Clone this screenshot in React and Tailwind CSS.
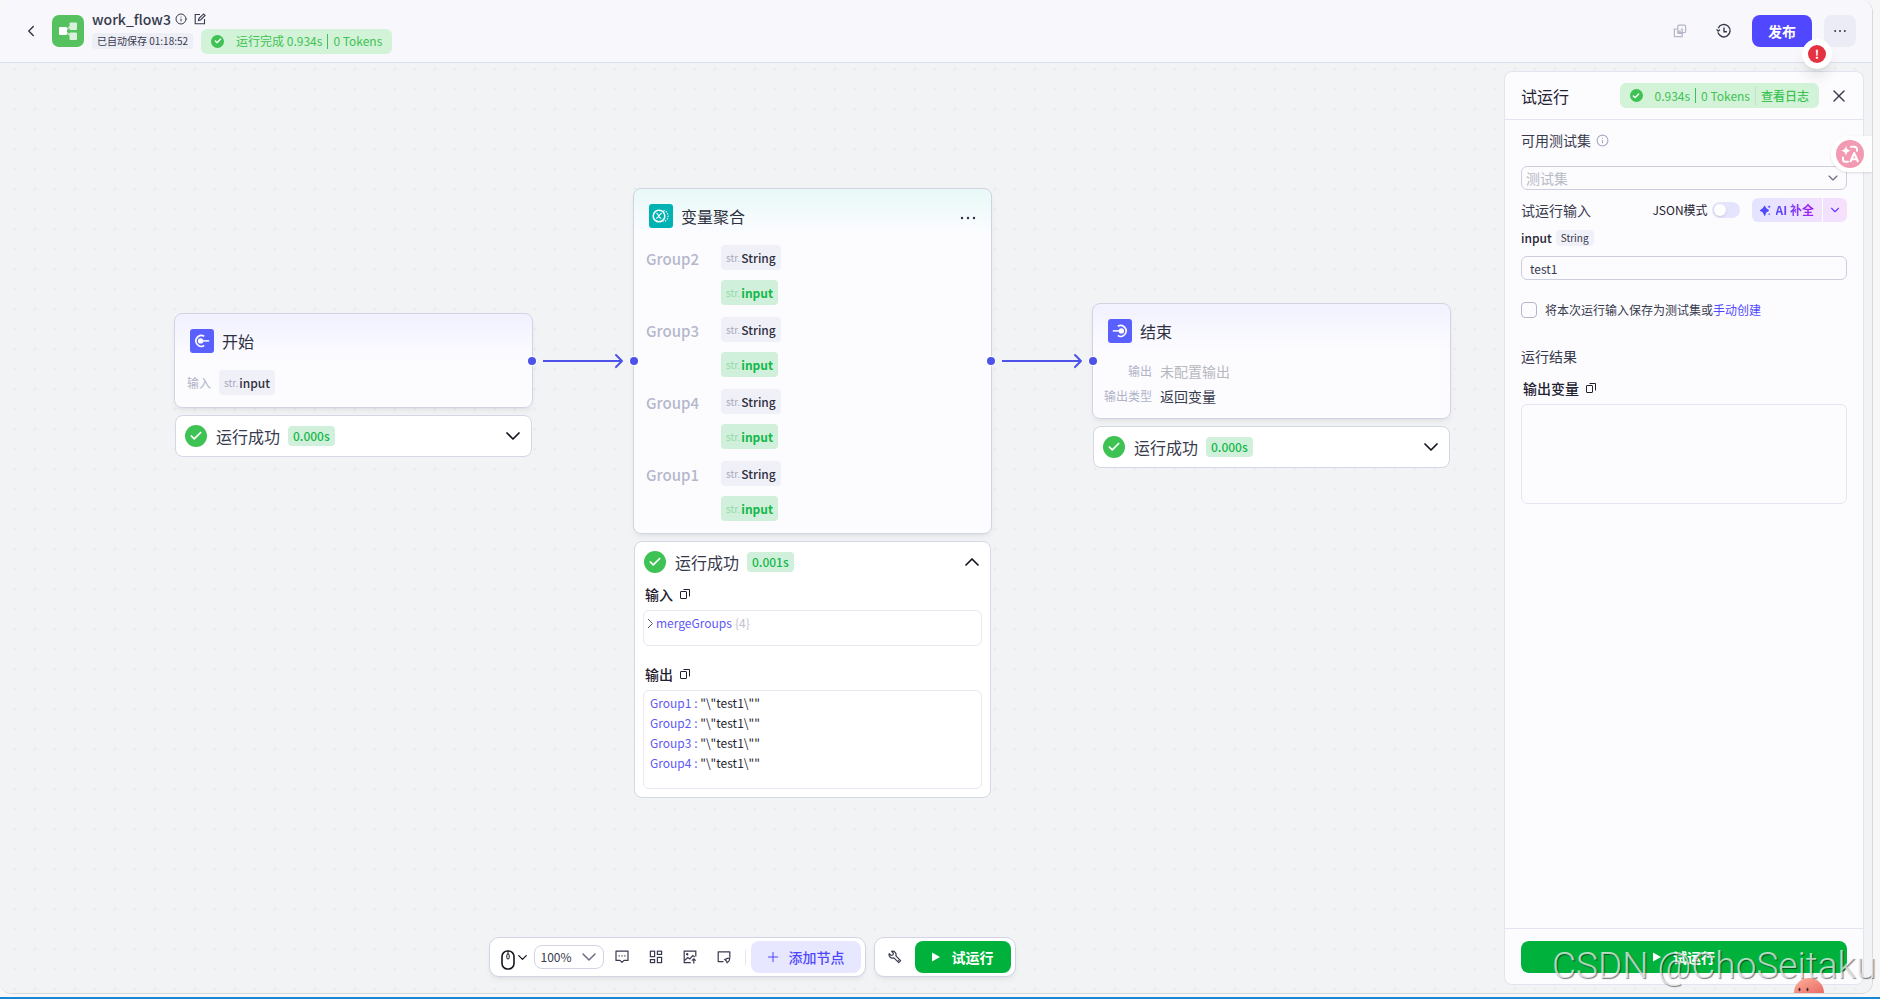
import React, { useState } from "react";
import { Check, ChevronDown, ChevronLeft, ChevronUp, Info, Plus, X } from "lucide-react";

const groups = ["Group2", "Group3", "Group4", "Group1"];
const outputs = ["Group1", "Group2", "Group3", "Group4"];

const CopyIcon = () => (
  <svg className="w-3 h-3" viewBox="0 0 12 12" fill="none" stroke="currentColor" strokeWidth="1">
    <rect x="1.5" y="3.5" width="6" height="7" rx="0.5" />
    <path d="M4.500 1.500h6v7" />
  </svg>
);

const MoreIcon = () => (
  <svg className="w-4 h-4" viewBox="0 0 16 16" fill="currentColor">
    <circle cx="2" cy="8" r="1.2" />
    <circle cx="8" cy="8" r="1.2" />
    <circle cx="14" cy="8" r="1.2" />
  </svg>
);

const CheckDot = () => (
  <span className="w-[13px] h-[13px] rounded-full bg-[#3ec254] text-white flex items-center justify-center">
    <Check className="w-2 h-2" strokeWidth={4} />
  </span>
);

const EditIcon = () => (
  <svg className="w-3 h-3" viewBox="0 0 12 12" fill="none" stroke="currentColor" strokeWidth="1.1">
    <path d="M6 1.5H1.2v9.3h9.3V6" />
    <path d="M4.5 7.5 5 5.4 9.6.9l1.5 1.5-4.5 4.6z" />
  </svg>
);

const StartIcon = () => (
  <svg className="w-6 h-6" viewBox="0 0 24 24" fill="none">
    <rect width="24" height="24" rx="3" fill="#5a5fff" />
    <path d="M14.2 7.3a5.4 5.4 0 1 0 0 9.2" stroke="#fff" strokeWidth="1.6" />
    <circle cx="10.6" cy="11.9" r="2.7" fill="#fff" />
    <path d="M12 11.9h7.2" stroke="#fff" strokeWidth="1.5" />
  </svg>
);

const EndIcon = () => (
  <svg className="w-6 h-6" viewBox="0 0 24 24" fill="none">
    <rect width="24" height="24" rx="3" fill="#5a5fff" />
    <path d="M9.8 7.3a5.4 5.4 0 1 1 0 9.2" stroke="#fff" strokeWidth="1.6" />
    <circle cx="13.4" cy="11.9" r="2.7" fill="#fff" />
    <path d="M4.8 11.9H12" stroke="#fff" strokeWidth="1.5" />
  </svg>
);

const MergeIcon = () => (
  <svg className="w-6 h-6" viewBox="0 0 24 24" fill="none" stroke="#fff">
    <rect width="24" height="24" rx="3" fill="#00b2b2" stroke="none" />
    <circle cx="10" cy="12" r="5.8" strokeWidth="1.5" />
    <path d="M7.4 9.4c2.2-.6 2 5.4 4.8 5M12.8 9.4c-2-.4-3.4 5-5.6 5" strokeWidth="1.2" />
    <path d="M14.4 6.3a5.8 5.8 0 0 1 0 11.4" strokeWidth="1.2" strokeDasharray="1.5 1" opacity=".8" />
  </svg>
);

const Tag = ({ name, active }) => (
  <span
    className={`h-[25px] px-[5px] rounded flex items-center gap-px text-xs ${
      active ? "bg-[#d1f0dc] text-[#12b849] font-bold" : "bg-[#f0f0f8] text-[#30303f] font-medium"
    }`}
  >
    <span className={`text-[10px] font-normal ${active ? "text-[#90dba9]" : "text-[#a7a9be]"}`}>str.</span>
    {name}
  </span>
);

const Port = ({ side }) => (
  <span
    className={`absolute z-10 w-2 h-2 rounded-full bg-[#4d53e8] ring-1 ring-white ${
      side === "left" ? "-left-1" : "-right-1"
    } top-1/2 -translate-y-1/2`}
  />
);

const NodeHeader = ({ icon, title, children }) => (
  <div className="flex items-center gap-2 px-[15px] pt-[15px] text-[#2e3040]">
    {icon}
    <h2 className="flex-1 text-base leading-6">{title}</h2>
    {children}
  </div>
);

const RunResult = ({ time, open, children }) => (
  <div className="mt-[7px] mx-px rounded-lg border border-[#d5d7e6] bg-white">
    <div className="h-10 pl-[9px] pr-[6px] flex items-center">
      <span className="w-[22px] h-[22px] rounded-full bg-[#3ec254] text-white flex items-center justify-center">
        <Check className="w-[14px] h-[14px]" strokeWidth={3} />
      </span>
      <span className="ml-[9px] text-base leading-6 text-[#383a4d]">运行成功</span>
      <span className="ml-2 h-5 px-[5px] rounded bg-[#d1f0dc] text-xs leading-5 font-medium text-[#12b849]">{time}</span>
      <button aria-label="展开" className="ml-auto text-[#15161f]">
        {open ? <ChevronUp className="w-6 h-6" strokeWidth={1.75} /> : <ChevronDown className="w-6 h-6" strokeWidth={1.75} />}
      </button>
    </div>
    {children}
  </div>
);

const Edge = ({ className }) => (
  <svg className={`absolute w-[84px] h-4 ${className}`} viewBox="0 0 84 16" fill="none" stroke="#4d53e8" strokeWidth="2">
    <path d="M0 8h79" />
    <path d="M73 2l6 6-6 6" strokeLinecap="round" strokeLinejoin="round" />
  </svg>
);

const Header = () => (
  <header className="shrink-0 h-[63px] pl-[22px] pr-4 border-b border-[#dde1ee] bg-[#f7f7fc] flex items-center text-[#383a4d]">
    <button aria-label="返回" className="mr-3">
      <ChevronLeft className="w-[18px] h-[18px]" />
    </button>
    <svg className="w-8 h-8 mr-2" viewBox="0 0 32 32">
      <rect width="32" height="32" rx="7" fill="#55c15f" />
      <path d="M14 15l5-4M14 17l5 4" stroke="#cdeccf" strokeWidth="1.5" />
      <rect x="7" y="12" width="8" height="8" rx="1" fill="#fff" />
      <rect x="17.5" y="7.5" width="7.5" height="7.5" rx="1" fill="#d9f1da" />
      <rect x="17.5" y="17.5" width="7.5" height="7.5" rx="1" fill="#d9f1da" />
    </svg>
    <div>
      <div className="h-5 flex items-center">
        <h1 className="text-sm leading-5 font-medium">work_flow3</h1>
        <Info className="w-3 h-3 ml-1" />
        <button aria-label="编辑" className="ml-[7px]">
          <EditIcon />
        </button>
      </div>
      <div className="flex items-center gap-2">
        <span className="h-4 px-[5px] rounded bg-[#eeeef7] text-[10px] leading-4">已自动保存 01:18:52</span>
        <div className="h-[25px] px-[10px] rounded-md bg-[#d3f3d8] text-[#3ec254] text-xs flex items-center">
          <CheckDot />
          <span className="ml-3">运行完成 0.934s</span>
          <span className="mx-[5px] w-px h-[15px] bg-[#3ec254]" />
          <span>0 Tokens</span>
        </div>
      </div>
    </div>
    <div className="ml-auto flex items-center">
      <button aria-label="复制" className="text-[#b4b6ca]">
        <svg className="w-[14px] h-[14px]" viewBox="0 0 14 14" fill="none" stroke="currentColor" strokeWidth="1.2">
          <path d="M8 5.2h1.2V9.5H5V8" />
          <rect x="4.8" y="1.2" width="7.8" height="7.4" rx="1" />
          <path d="M4.8 5H1.4v7.6h7.8V8.6M4.8 7.2h3" />
        </svg>
      </button>
      <button aria-label="历史" className="ml-[29px] mr-5">
        <svg className="w-4 h-4" viewBox="0 0 16 16" fill="none" stroke="currentColor" strokeWidth="1.4">
          <path d="M2.2 5.2a6.2 6.2 0 1 1-.3 4.200" />
          <path d="M.6 6.4l1.5 1.7 1.9-1.4M8 4.5v4.2h3" />
        </svg>
      </button>
      <div className="relative">
        <button className="w-[60px] h-8 rounded-lg bg-[#5147ff] text-white text-sm font-bold">发布</button>
        <span className="absolute z-20 left-[50px] top-6 w-[30px] h-[30px] rounded-full bg-white shadow-lg flex items-center justify-center">
          <span className="w-[18px] h-[18px] rounded-full bg-[#e53241] text-white text-xs leading-[18px] text-center font-bold">!</span>
        </span>
      </div>
      <button aria-label="更多" className="ml-3 w-8 h-8 rounded-lg bg-[#ececf6] flex items-center justify-center">
        <svg className="w-3 h-3" viewBox="0 0 12 12" fill="currentColor">
          <circle cx="1.2" cy="6" r="1" />
          <circle cx="6" cy="6" r="1" />
          <circle cx="10.8" cy="6" r="1" />
        </svg>
      </button>
    </div>
  </header>
);

const Flow = () => (
  <>
    <section className="absolute left-[174px] top-[250px] w-[359px]">
      <div className="relative rounded-lg border border-[#d2d4e6] bg-linear-to-b from-[#f1f1ff] to-[#fcfcff] to-[46px] shadow-md shadow-black/5 pb-3">
        <Port side="right" />
        <NodeHeader icon={<StartIcon />} title="开始" />
        <div className="mt-[17px] pl-3 flex items-center gap-2">
          <span className="text-xs text-[#b0b3c8]">输入</span>
          <Tag name="input" />
        </div>
      </div>
      <RunResult time="0.000s" />
    </section>

    <Edge className="left-[543px] top-[290px]" />

    <section className="absolute left-[633px] top-[125px] w-[359px]">
      <div className="relative rounded-lg border border-[#cfd3e2] bg-linear-to-b from-[#e8f9f8] to-[#fcfcff] to-[46px] shadow-md shadow-black/5 pb-3">
        <Port side="left" />
        <Port side="right" />
        <NodeHeader icon={<MergeIcon />} title="变量聚合">
          <button aria-label="更多" className="mt-1">
            <MoreIcon />
          </button>
        </NodeHeader>
        <div className="mt-[17px] pl-3 flex flex-col gap-3">
          {groups.map((group) => (
            <div key={group} className="flex items-start">
              <span className="w-[75px] text-[15px] leading-[27px] font-medium text-[#b4b7ca]">{group}</span>
              <div className="flex flex-col items-start gap-[10px]">
                <Tag name="String" />
                <Tag name="input" active />
              </div>
            </div>
          ))}
        </div>
      </div>
      <RunResult time="0.001s" open>
        <div className="px-2 pb-2 text-xs leading-5">
          <h3 className="ml-[2px] mt-[2px] mb-[6px] flex items-center gap-[6px] text-sm leading-5 font-medium text-[#1f2130]">
            输入 <CopyIcon />
          </h3>
          <div className="h-9 pt-[2px] pl-[2px] rounded-md border border-[#e8e9f3] flex items-start">
            <svg className="w-[10px] h-5" viewBox="0 0 10 20" fill="none" stroke="#555768">
              <path d="M2 6l4.500 4.500L2 15" />
            </svg>
            <span className="text-[#6059f5]">mergeGroups</span>
            <span className="ml-[3px] text-[#bfc1cc]">{"{4}"}</span>
          </div>
          <h3 className="ml-[2px] mt-[18px] mb-[6px] flex items-center gap-[6px] text-sm leading-5 font-medium text-[#1f2130]">
            输出 <CopyIcon />
          </h3>
          <div className="pt-[2px] pb-[15px] pl-[6px] rounded-md border border-[#e8e9f3] text-[#24252e]">
            {outputs.map((key) => (
              <p key={key}>
                <span className="text-[#6059f5]">{key} :</span> {'"\\"test1\\""'}
              </p>
            ))}
          </div>
        </div>
      </RunResult>
    </section>

    <Edge className="left-[1002px] top-[290px]" />

    <section className="absolute left-[1092px] top-[240px] w-[359px]">
      <div className="relative rounded-lg border border-[#d2d4e6] bg-linear-to-b from-[#f1f1ff] to-[#fcfcff] to-[46px] shadow-md shadow-black/5 pb-3">
        <Port side="left" />
        <NodeHeader icon={<EndIcon />} title="结束" />
        <dl className="mt-[18px] pl-3 grid grid-cols-[47px_1fr] gap-x-2 gap-y-[5px] text-sm leading-5">
          <dt className="text-right text-xs leading-5 text-[#b0b3c8] whitespace-nowrap">输出</dt>
          <dd className="text-[#b8b8c0]">未配置输出</dd>
          <dt className="-ml-px text-right text-xs leading-5 text-[#b0b3c8] whitespace-nowrap">输出类型</dt>
          <dd className="text-[#383a4d]">返回变量</dd>
        </dl>
      </div>
      <RunResult time="0.000s" />
    </section>
  </>
);

const Toolbar = () => {
  const [zoom, setZoom] = useState("100%");

  return (
    <div className="absolute left-0 right-[368px] bottom-4 flex justify-center gap-2 text-[#383a4d]">
      <div className="h-10 pl-[11px] pr-1 rounded-[10px] border border-[#d2d4e6] bg-white shadow-md shadow-black/5 flex items-center">
        <button aria-label="鼠标模式" className="flex items-center text-[#15161f]">
          <svg className="w-[14px] h-5 mt-[5px]" viewBox="0 0 14 20" fill="none" stroke="currentColor">
            <rect x="1" y="1" width="12" height="18" rx="5.5" strokeWidth="1.6" />
            <path d="M7 1v3" />
            <rect x="5.8" y="4" width="2.4" height="5" rx="1.2" />
          </svg>
          <ChevronDown className="w-[15px] h-[15px]" />
        </button>
        <div className="relative ml-1">
          <select
            aria-label="缩放"
            value={zoom}
            onChange={(e) => setZoom(e.target.value)}
            className="block appearance-none w-[70px] h-6 pl-[6px] rounded-lg border border-[#d2d4e6] bg-white text-xs leading-5"
          >
            <option>50%</option>
            <option>100%</option>
            <option>150%</option>
          </select>
          <ChevronDown className="absolute right-[3px] top-0 w-6 h-6 text-[#6b6d85] pointer-events-none" strokeWidth={1.5} />
        </div>
        <div className="ml-[11px] flex items-center gap-5">
          <button aria-label="注释">
            <svg className="w-[14px] h-[14px]" viewBox="0 0 14 14" fill="none" stroke="currentColor" strokeWidth="1.2">
              <path d="M1 1.2h12v9.2H9l-2 2-2-2H1z" strokeLinejoin="round" />
              <path d="M3.5 5.9h1.2M6.4 5.9h1.2M9.3 5.9h1.2" strokeWidth="1.4" />
            </svg>
          </button>
          <button aria-label="布局">
            <svg className="w-[14px] h-[14px]" viewBox="0 0 14 14" fill="none" stroke="currentColor" strokeWidth="1.2">
              <rect x="1.4" y="1.2" width="4.2" height="5.4" />
              <rect x="8.4" y="1.2" width="4.2" height="3.2" />
              <rect x="1.4" y="9.6" width="4.2" height="3" />
              <rect x="8.4" y="7.4" width="4.2" height="5.2" />
            </svg>
          </button>
          <button aria-label="导出图片">
            <svg className="w-[14px] h-[14px]" viewBox="0 0 14 14" fill="none" stroke="currentColor" strokeWidth="1.2">
              <path d="M12.8 6.5V1.2H1.2v11.4h6.6" />
              <path d="M1.5 10.5l3.300-3 2 1.500 3-3.500 2 1.500M10.800 13.500V9.200M8.900 10.600l1.900-1.800 1.900 1.800" />
              <circle cx="4.2" cy="4.2" r=".6" fill="currentColor" />
            </svg>
          </button>
          <button aria-label="小地图">
            <svg className="w-[14px] h-[14px]" viewBox="0 0 14 14" fill="none" stroke="currentColor" strokeWidth="1.2">
              <path d="M12.8 7V1.8H1.2v9.8h5.3" strokeLinejoin="round" />
              <path d="M7.8 9.6l2.6-1.2 2.4-.4-.7 2.8-2 2-.7-1.7z" />
            </svg>
          </button>
        </div>
        <span className="ml-[14px] mr-[5px] w-px h-4 bg-[#e6e7f0]" />
        <button className="h-8 pl-[14px] pr-4 rounded-lg bg-[#e7e7ff] text-[#5147ff] text-sm font-medium flex items-center gap-2">
          <Plus className="w-4 h-4" strokeWidth={1.5} />
          添加节点
        </button>
      </div>
      <div className="h-10 pl-[13px] pr-1 rounded-[10px] border border-[#d2d4e6] bg-white shadow-md shadow-black/5 flex items-center">
        <button aria-label="调试">
          <svg className="w-[14px] h-[14px]" viewBox="0 0 14 14" fill="none" stroke="currentColor" strokeWidth="1.2" strokeLinejoin="round">
            <path d="M1.2 3.6l1.9 1.8 1.9-.4.3-1.8L3.7 1.300a3.500 3.500 0 0 1 4.200 4.500l4.700 4.900-1.900 1.900-4.800-4.700A3.500 3.500 0 0 1 1.200 3.600z" />
            <path d="M10 10l.8.8" />
          </svg>
        </button>
        <button className="ml-[13px] h-8 px-[17px] rounded-lg bg-[#00b23c] text-white text-sm font-bold flex items-center gap-3">
          <svg className="w-2 h-[10px]" viewBox="0 0 8 10" fill="currentColor">
            <path d="M0 .5v9L8 5z" />
          </svg>
          试运行
        </button>
      </div>
    </div>
  );
};

const TestPanel = () => {
  const [value, setValue] = useState("test1");
  const [json, setJson] = useState(false);
  const [save, setSave] = useState(false);

  return (
    <aside className="absolute right-2 top-2 bottom-2 w-[360px] rounded-lg border border-[#e2e4ef] bg-[#fcfcff] flex flex-col text-[#383a4d]">
      <div className="h-12 pl-4 pr-[14px] border-b border-[#e2e4ef] flex items-center">
        <h2 className="text-base leading-6 text-[#1f2130]">试运行</h2>
        <div className="ml-auto h-[25px] px-[10px] rounded-md bg-[#d3f3d8] text-[#3ec254] text-xs flex items-center">
          <CheckDot />
          <span className="ml-3">0.934s</span>
          <span className="mx-[5px] w-px h-[15px] bg-[#3ec254]" />
          <span>0 Tokens</span>
          <span className="mx-[5px] w-px h-5 bg-[#bfe5c8]" />
          <a href="#log" className="font-medium">查看日志</a>
        </div>
        <button aria-label="关闭" className="ml-[10px]">
          <X className="w-5 h-5" strokeWidth={1.75} />
        </button>
      </div>

      <div className="flex-1 px-4">
        <div className="mt-[10px] flex items-center gap-[5px]">
          <label htmlFor="testset" className="text-sm leading-5">可用测试集</label>
          <Info className="w-[13px] h-[13px] text-[#a7a9be]" />
        </div>
        <div className="relative mt-4">
          <select
            id="testset"
            defaultValue=""
            className="block appearance-none w-full h-6 pl-1 rounded-md border border-[#cdcfe0] bg-transparent text-sm leading-5 text-[#b8b9c4]"
          >
            <option value="">测试集</option>
          </select>
          <ChevronDown className="absolute right-[6px] top-1 w-4 h-4 text-[#6b6d85] pointer-events-none" strokeWidth={1.75} />
        </div>

        <div className="mt-2 h-6 flex items-center">
          <h3 className="text-sm leading-5">试运行输入</h3>
          <label htmlFor="json" className="ml-auto text-xs leading-4 text-[#1f2130]">JSON模式</label>
          <span className="relative ml-1 w-7 h-4">
            <input
              id="json"
              type="checkbox"
              role="switch"
              checked={json}
              onChange={() => setJson(!json)}
              className="peer block appearance-none w-7 h-4 rounded-full bg-[#e4e4fd] checked:bg-[#5147ff]"
            />
            <span className="absolute left-[2px] top-[2px] w-3 h-3 rounded-full bg-white shadow pointer-events-none peer-checked:left-[14px]" />
          </span>
          <div className="ml-3 h-6 rounded-md overflow-hidden bg-linear-to-r from-[#e4e4ff] to-[#f6e0fd] flex">
            <button className="px-2 flex items-center gap-[5px] text-xs font-bold">
              <svg className="w-[11px] h-[11px]" viewBox="0 0 12 12" fill="#5147ff">
                <path d="M5 1.5c.5 2.7 1.200 3.500 4.200 4.500-3 1-3.700 1.800-4.200 5C4.500 7.800 3.700 7 .5 6c3.200-1 4-1.800 4.500-4.500z" stroke="#5147ff" strokeWidth="1.4" strokeLinejoin="round" />
                <path d="M10 0c.2 1.200.6 1.600 2 2-1.400.4-1.800.8-2 2-.2-1.200-.6-1.600-2-2 1.400-.4 1.800-.8 2-2zM10 8.400c.2.900.5 1.200 1.600 1.500-1.100.3-1.400.6-1.600 1.500-.2-.9-.5-1.200-1.600-1.500 1.100-.3 1.400-.6 1.600-1.500z" />
              </svg>
              <span className="bg-linear-to-r from-[#5147ff] to-[#a90ff0] bg-clip-text text-transparent">AI 补全</span>
            </button>
            <span className="w-px bg-white" />
            <button aria-label="更多补全" className="w-6 flex items-center justify-center text-[#6a3bfa]">
              <ChevronDown className="w-[14px] h-[14px]" />
            </button>
          </div>
        </div>

        <div className="mt-2 h-4 flex items-center gap-1">
          <label htmlFor="input" className="text-xs leading-4 font-medium text-[#1f2130]">input</label>
          <span className="h-4 px-[5px] rounded bg-[#f0f0f8] text-[10px] leading-4">String</span>
        </div>
        <input
          id="input"
          value={value}
          onChange={(e) => setValue(e.target.value)}
          className="mt-[10px] block w-full h-6 px-2 rounded-md border border-[#cdcfe0] bg-transparent text-xs"
        />

        <div className="mt-[22px] flex items-center gap-2 text-xs leading-4">
          <input
            id="save"
            type="checkbox"
            checked={save}
            onChange={() => setSave(!save)}
            className="appearance-none w-4 h-4 rounded border border-[#b4b6ca] checked:bg-[#5147ff]"
          />
          <span>
            <label htmlFor="save">将本次运行输入保存为测试集或</label>
            <a href="#create" className="text-[#5147ff]">手动创建</a>
          </span>
        </div>

        <h3 className="mt-7 text-sm leading-5">运行结果</h3>
        <h4 className="ml-[2px] mt-3 flex items-center gap-[6px] text-sm leading-5 font-medium text-[#1f2130]">
          输出变量 <CopyIcon />
        </h4>
        <div className="mt-[6px] h-[100px] rounded-md border border-[#e6e6f2]" />
      </div>

      <div className="px-4 pt-3 pb-[11px] border-t border-[#e2e4ef]">
        <button className="w-full h-8 rounded-lg bg-[#00b23c] text-white text-sm font-bold flex items-center justify-center gap-3">
          <svg className="w-2 h-[10px]" viewBox="0 0 8 10" fill="currentColor">
            <path d="M0 .5v9L8 5z" />
          </svg>
          试运行
        </button>
      </div>
    </aside>
  );
};

const App = () => {
  return (
    <div className="relative h-screen overflow-hidden bg-[#f7f7f8] border-b-2 border-[#1a84d6] pr-[7px] pb-[3px] flex flex-col font-['Noto_Sans_CJK_SC','Noto_Sans',sans-serif]">
      <div className="relative flex-1 min-h-0 rounded-xl border-r border-b border-[#d9dadd] overflow-hidden flex flex-col">
        <Header />
        <main className="relative flex-1 min-h-0 bg-[#f2f3f5] bg-[radial-gradient(circle,#ebecef_1px,transparent_2px)] bg-size-[20px_20px] bg-position-[5px_-4px]">
          <Flow />
          <Toolbar />
          <TestPanel />
        </main>

        {/* Translate shortcut */}
        <button aria-label="翻译" className="absolute right-0 top-[136px] w-[41px] h-9 pl-[5px] rounded-l-full bg-white/90 shadow-sm flex items-center">
          <svg className="w-7 h-7" viewBox="0 0 28 28" fill="none" stroke="#fff" strokeWidth="2">
            <circle cx="14" cy="14" r="14" fill="#f29ab2" stroke="none" />
            <path d="M10 5.5c.7 3.5 1.5 4.4 5 5.2-3.5.8-4.3 1.7-5 5.2-.7-3.5-1.5-4.4-5-5.2 3.5-.8 4.3-1.7 5-5.2z" fill="#fff" stroke="none" />
            <path d="M15 6.8h3.5a2.5 2.5 0 0 1 2.5 2.5v1.5M7 17.5v1.7a2.5 2.5 0 0 0 2.5 2.5H12" strokeLinecap="round" />
            <path d="M14.3 22l3.9-9 3.9 9M15.6 19.2h5.2" strokeLinejoin="round" />
          </svg>
        </button>

        {/* Mascot peeking over the bottom edge */}
        <svg className="absolute right-12 bottom-0 w-[30px] h-[15px]" viewBox="0 0 30 15">
          <defs>
            <linearGradient id="mascot" x1="0" y1="0" x2="1" y2="1">
              <stop offset="0" stopColor="#ffb29e" />
              <stop offset="1" stopColor="#e86a63" />
            </linearGradient>
          </defs>
          <path d="M0 15C0 6 7 0 15 0s15 6 15 15z" fill="url(#mascot)" />
          <ellipse cx="5.5" cy="11.5" rx="1" ry="1.8" fill="#442628" />
          <ellipse cx="13.5" cy="11.5" rx="1" ry="1.8" fill="#442628" />
        </svg>
      </div>

      <span className="absolute right-1 bottom-[11px] font-[Roboto] font-light text-[37px] leading-10 text-white/70 [text-shadow:1px_1px_1px_rgba(0,0,0,0.5)] pointer-events-none">
        CSDN @ChoSeitaku
      </span>
    </div>
  );
};

export default App;
